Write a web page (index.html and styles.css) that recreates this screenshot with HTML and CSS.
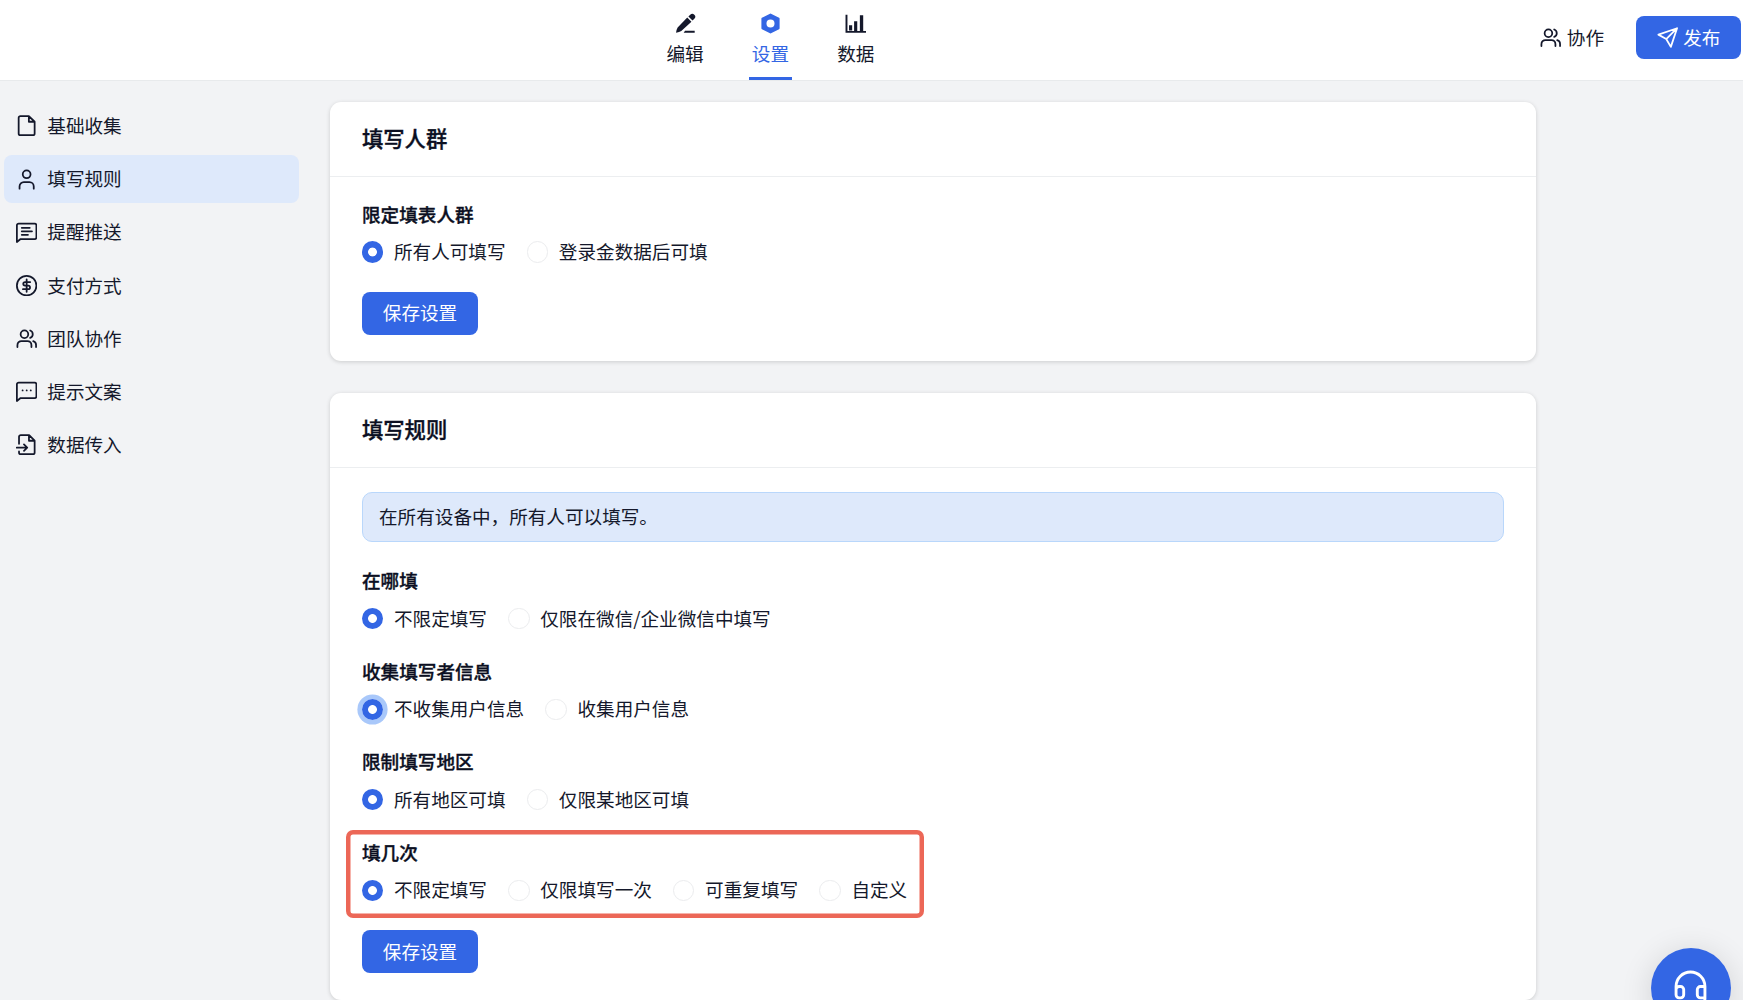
FILE: index.html
```html
<!DOCTYPE html>
<html lang="zh-CN">
<head>
    <meta charset="UTF-8">
    <meta name="viewport" content="width=device-width, initial-scale=1.0">
    <title>填写规则</title>
    <link rel="stylesheet" href="styles.css">
</head>
<body>
    <svg class="sprite" width="0" height="0">
        <symbol id="icon-users" viewBox="0 0 24 24">
            <circle cx="9.5" cy="7" r="4.3"/>
            <path d="M1.6 21.5v-2.2a4.6 4.6 0 0 1 4.6-4.6h6.6a4.6 4.6 0 0 1 4.6 4.6v2.2M16 2.8a4.5 4.5 0 0 1 0 8.4M19.4 14.8a4.5 4.5 0 0 1 3.2 4.5v2.2"/>
        </symbol>
    </svg>

    <header class="header">
        <nav class="tabs">
            <a class="tab">
                <svg class="tab-icon" viewBox="0 0 24 24">
                    <path fill="currentColor" d="M14 5.2l4.8 4.8L7.2 20.6Q5 22 1.2 22.6Q1.6 19 3 16.6zM15.3 4L17.4 1.9a3.3 3.3 0 0 1 4.7 4.7L20 8.7zM11.5 20.4h11v2.2h-12.6z"/>
                </svg>
                <span>编辑</span>
            </a>
            <a class="tab active">
                <svg class="tab-icon" viewBox="0 0 24 24">
                    <path fill="currentColor" fill-rule="evenodd" d="M12 .6l9.8 4.9q.6.3.6 1v11q0 .7-.6 1L12 23.4l-9.8-4.9q-.6-.3-.6-1v-11q0-.7.6-1zM12 7.4a4.6 4.6 0 1 0 0 9.2a4.6 4.6 0 0 0 0-9.2z"/>
                </svg>
                <span>设置</span>
            </a>
            <a class="tab">
                <svg class="tab-icon" viewBox="0 0 24 24">
                    <path fill="currentColor" d="M.6 2h2.2v18.6H24v2H.6zM4.6 14h3.6v6H4.6zM10.4 9.5H14v11h-3.6zM17 2.6h3.8v18H17z"/>
                </svg>
                <span>数据</span>
            </a>
        </nav>
        <div class="header-actions">
            <a class="collab">
                <svg class="icon" viewBox="0 0 24 24"><use href="#icon-users"/></svg>
                <span>协作</span>
            </a>
            <button class="btn btn-publish">
                <svg class="icon" viewBox="0 0 24 24"><path d="M22.6 1.4L1.6 8.6l8.8 5l5.2 8.8zM22.6 1.4L10.4 13.6"/></svg>
                <span>发布</span>
            </button>
        </div>
    </header>

    <div class="layout">
        <aside class="sidebar">
            <a class="menu-item">
                <svg class="icon" viewBox="0 0 24 24"><path d="M14.5 1.2H5a2 2 0 0 0-2 2v17.6a2 2 0 0 0 2 2h14a2 2 0 0 0 2-2V7.6zM14.5 1.2v6.4H21"/></svg>
                <span>基础收集</span>
            </a>
            <a class="menu-item active">
                <svg class="icon" viewBox="0 0 24 24"><circle cx="12" cy="6" r="4.4"/><path d="M4 22.2v-2.5a4.8 4.8 0 0 1 4.8-4.8h6.4a4.8 4.8 0 0 1 4.8 4.8v2.5"/></svg>
                <span>填写规则</span>
            </a>
            <a class="menu-item">
                <svg class="icon" viewBox="0 0 24 24"><path d="M3 1.8h18a2 2 0 0 1 2 2v13.4a2 2 0 0 1-2 2H5.2L1 22.6V3.8a2 2 0 0 1 2-2zM6.5 6.5h9M6.5 10.5h11.5M6.5 14.5h7"/></svg>
                <span>提醒推送</span>
            </a>
            <a class="menu-item">
                <svg class="icon" viewBox="0 0 24 24"><circle cx="12" cy="12" r="11"/><path d="M12 5v14M16 8h-5.8a2 2 0 0 0 0 4h3.6a2 2 0 0 1 0 4H7.8"/></svg>
                <span>支付方式</span>
            </a>
            <a class="menu-item">
                <svg class="icon" viewBox="0 0 24 24"><use href="#icon-users"/></svg>
                <span>团队协作</span>
            </a>
            <a class="menu-item">
                <svg class="icon" viewBox="0 0 24 24"><path d="M3 1.8h18a2 2 0 0 1 2 2v13.4a2 2 0 0 1-2 2H5.2L1 22.6V3.8a2 2 0 0 1 2-2zM7.4 10.6h.1M12 10.6h.1M16.6 10.6h.1"/></svg>
                <span>提示文案</span>
            </a>
            <a class="menu-item">
                <svg class="icon" viewBox="0 0 24 24"><path d="M3.4 11V3.2a2 2 0 0 1 2-2h9.4L21 7.4v13.4a2 2 0 0 1-2 2H5.4a2 2 0 0 1-2-2v-1.2M14.6 1.2v6.4H21M.8 15.4h11.4M9 11.8l3.6 3.6L9 19"/></svg>
                <span>数据传入</span>
            </a>
        </aside>

        <main class="content">
            <section class="card">
                <h2 class="card-title">填写人群</h2>
                <div class="card-body">
                    <div class="field">
                        <h3 class="field-label">限定填表人群</h3>
                        <div class="radio-group">
                            <label class="radio"><input type="radio" name="audience" checked><span>所有人可填写</span></label>
                            <label class="radio"><input type="radio" name="audience"><span>登录金数据后可填</span></label>
                        </div>
                    </div>
                    <button class="btn"><span>保存设置</span></button>
                </div>
            </section>

            <section class="card">
                <h2 class="card-title">填写规则</h2>
                <div class="card-body">
                    <div class="notice">在所有设备中，所有人可以填写。</div>
                    <div class="field">
                        <h3 class="field-label">在哪填</h3>
                        <div class="radio-group">
                            <label class="radio"><input type="radio" name="where" checked><span>不限定填写</span></label>
                            <label class="radio"><input type="radio" name="where"><span>仅限在微信/企业微信中填写</span></label>
                        </div>
                    </div>
                    <div class="field">
                        <h3 class="field-label">收集填写者信息</h3>
                        <div class="radio-group">
                            <label class="radio"><input type="radio" class="focused" name="userinfo" checked><span>不收集用户信息</span></label>
                            <label class="radio"><input type="radio" name="userinfo"><span>收集用户信息</span></label>
                        </div>
                    </div>
                    <div class="field">
                        <h3 class="field-label">限制填写地区</h3>
                        <div class="radio-group">
                            <label class="radio"><input type="radio" name="region" checked><span>所有地区可填</span></label>
                            <label class="radio"><input type="radio" name="region"><span>仅限某地区可填</span></label>
                        </div>
                    </div>
                    <div class="field highlight">
                        <h3 class="field-label">填几次</h3>
                        <div class="radio-group">
                            <label class="radio"><input type="radio" name="times" checked><span>不限定填写</span></label>
                            <label class="radio"><input type="radio" name="times"><span>仅限填写一次</span></label>
                            <label class="radio"><input type="radio" name="times"><span>可重复填写</span></label>
                            <label class="radio"><input type="radio" name="times"><span>自定义</span></label>
                        </div>
                    </div>
                    <button class="btn"><span>保存设置</span></button>
                </div>
            </section>
        </main>
    </div>

    <button class="support">
        <svg class="support-icon" viewBox="0 0 32 32">
            <path d="M2 20v-4a14 14 0 0 1 14-14a14 14 0 0 1 14 14v12a4 4 0 0 1-4 4h-8M2 19a3 3 0 0 1 3-3h1.4a3 3 0 0 1 3 3v5a3 3 0 0 1-3 3H5a3 3 0 0 1-3-3zM30 16h-4.4a3 3 0 0 0-3 3v5a3 3 0 0 0 3 3H30"/>
        </svg>
    </button>
</body>
</html>
```
FILE: styles.css
```css
*,
*::before {
    box-sizing: border-box;
}
body {
    margin: 0;
    height: 1000px;
    overflow: hidden;
    font-family: "Noto Sans CJK SC", sans-serif;
    font-size: 18.6px;
    line-height: 32px;
    color: #14182b;
    background-color: #f2f3f5;
}
.sprite {
    position: absolute;
}
.icon {
    width: 21.3px;
    height: 21.3px;
    flex: none;
    fill: none;
    stroke: currentColor;
    stroke-width: 2;
    stroke-linecap: round;
    stroke-linejoin: round;
}

/* header */
.header {
    display: flex;
    justify-content: space-between;
    height: 80px;
    padding: 0 2px 0 663.5px;
    background-color: #fff;
    box-shadow: 0 1px 0 #e8eaec;
}
.tabs {
    display: flex;
    gap: 42.4px;
}
.tab {
    display: flex;
    flex-direction: column;
    align-items: center;
    width: 43px;
    padding-top: 13px;
    border-bottom: 3px solid transparent;
    white-space: nowrap;
}
.tab span {
    margin-top: 3px;
}
.tab.active {
    color: #3366e4;
    border-bottom-color: #3366e4;
}
.tab-icon {
    width: 21px;
    height: 21px;
    flex: none;
}
.header-actions {
    display: flex;
    align-items: flex-start;
    padding-top: 16px;
}
.collab {
    display: flex;
    align-items: center;
    gap: 5.3px;
    height: 43px;
    margin-right: 32px;
}

/* buttons */
.btn {
    display: flex;
    align-items: center;
    justify-content: center;
    width: 116px;
    height: 43px;
    padding: 0;
    border: 0;
    border-radius: 8px;
    font-family: inherit;
    font-size: inherit;
    line-height: 32px;
    color: #fff;
    background-color: #3366e4;
    cursor: pointer;
}
.btn-publish {
    width: 105px;
    gap: 5.3px;
}
.card .btn {
    margin-top: 23.7px;
}
.btn span,
.collab span,
.menu-item span,
.radio span {
    margin-bottom: 2px;
}

/* layout */
.layout {
    display: flex;
}
.sidebar {
    display: flex;
    flex-direction: column;
    gap: 5.2px;
    width: 330px;
    padding: 22px 31.5px 0 4px;
}
.menu-item {
    display: flex;
    align-items: center;
    gap: 10.2px;
    height: 48px;
    padding-left: 11.8px;
    border-radius: 8px;
}
.menu-item.active {
    background-color: #dee9fb;
}
.content {
    width: 1206.4px;
    padding-top: 22px;
}

/* cards */
.card {
    margin-bottom: 32px;
    padding-bottom: 26.5px;
    border-radius: 11px;
    background-color: #fff;
    box-shadow: 0 1px 4px rgba(0, 0, 0, 0.16);
}
.card-title {
    margin: 0;
    height: 75px;
    padding: 0 32px;
    border-bottom: 1px solid #eceef0;
    font-size: 21.3px;
    font-weight: 500;
    line-height: 71px;
    color: #0b0f22;
    -webkit-text-stroke: 0.35px;
}
.card-body {
    padding: 21.8px 32px 0;
}
.notice {
    height: 50px;
    margin: 2px 0 23.2px;
    padding-left: 16px;
    border: 1px solid #b9d7fb;
    border-radius: 10px;
    line-height: 46px;
    background-color: #dee9fb;
}
.field + .field {
    margin-top: 21.3px;
}
.field-label {
    margin: 0 0 7.3px;
    font-size: 18.6px;
    font-weight: 500;
    line-height: 30px;
    color: #0b0f22;
    -webkit-text-stroke: 0.35px;
}
.radio-group {
    display: flex;
    height: 32px;
    gap: 21.3px;
}
.radio {
    display: flex;
    align-items: center;
    gap: 10.7px;
}
.radio input {
    appearance: none;
    width: 21.3px;
    height: 21.3px;
    margin: 0;
    border: 1px solid #ebecee;
    border-radius: 50%;
    background-color: #fff;
}
.radio input:checked {
    border: 0;
    background: radial-gradient(circle, #fff 4px, #3366e4 4.8px);
}
.radio input.focused {
    box-shadow: 0 0 0 4.6px #a9c8fa;
}

/* red frame drawn around the field without moving it */
.highlight {
    position: relative;
}
.highlight::before {
    content: "";
    position: absolute;
    top: -7px;
    left: -16.5px;
    width: 578.5px;
    height: 88px;
    border-radius: 7px;
    box-shadow: inset 0 0 0 4.5px #ec6757;
    pointer-events: none;
}

/* floating support button */
.support {
    position: fixed;
    right: 12.5px;
    bottom: -28px;
    display: flex;
    align-items: flex-start;
    justify-content: center;
    width: 80px;
    height: 80px;
    padding: 22px 0 0;
    border: 0;
    border-radius: 50%;
    background-color: #3366e4;
    box-shadow: 0 5px 32px rgba(0, 0, 0, 0.14);
}
.support-icon {
    width: 33px;
    height: 33px;
    overflow: visible;
    fill: none;
    stroke: #fff;
    stroke-width: 2.8;
    stroke-linecap: round;
    stroke-linejoin: round;
}
```
